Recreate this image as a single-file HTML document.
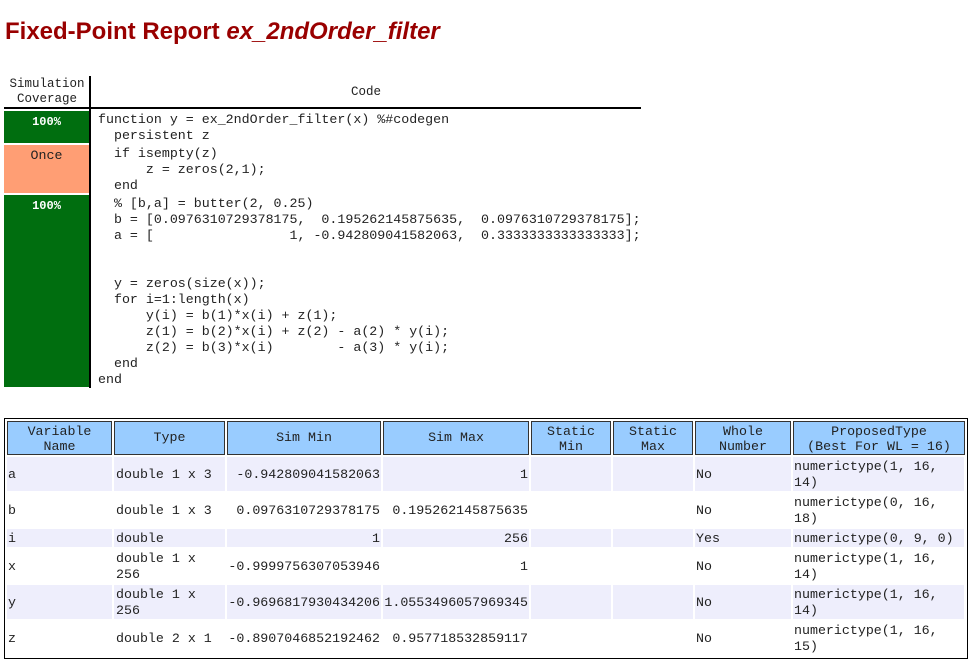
<!DOCTYPE html>
<html><head><meta charset="utf-8"><style>
*{margin:0;padding:0;box-sizing:border-box}
body{width:973px;height:661px;background:#fff;position:relative;overflow:hidden;font-family:"Liberation Mono","Courier New",monospace;font-size:13.3px;color:#222}
.a{position:absolute}
h1{position:absolute;left:5px;top:18px;font:bold 24px "Liberation Sans",Arial,sans-serif;color:#990000;white-space:nowrap}
.cov{position:absolute;left:4px;width:85px;text-align:center;line-height:16px;padding-top:3px}
pre{position:absolute;font:13.3px/16px "Liberation Mono",monospace;color:#222;margin:0}
.h{position:absolute;top:421px;height:34px;background:#99ccff;border:1px solid #333;text-align:center;line-height:14.5px;padding-top:3px;color:#222}
.r{position:absolute;left:7px;width:957px}
.c{position:absolute;white-space:pre;line-height:16px;margin-top:1px}
</style></head><body>
<h1>Fixed-Point Report <i>ex_2ndOrder_filter</i></h1>

<div class="a" style="left:4px;top:77px;width:86px;text-align:center;line-height:15px;font-size:12.5px">Simulation<br>Coverage</div>
<div class="a" style="left:91px;top:85px;width:550px;text-align:center;font-size:12.5px">Code</div>
<div class="a" style="left:89px;top:76px;width:2px;height:312px;background:#000"></div>
<div class="a" style="left:4px;top:107px;width:637px;height:2px;background:#000"></div>

<div class="cov" style="top:111px;height:32px;background:#006e0f;color:#fff;font-weight:bold;padding-top:3px;font-size:12px">100%</div>
<div class="cov" style="top:145px;height:48px;background:#ff9e74;padding-top:3px">Once</div>
<div class="cov" style="top:195px;height:192px;background:#006e0f;color:#fff;font-weight:bold;padding-top:3px;font-size:12px">100%</div>

<pre style="left:98px;top:112px">function y = ex_2ndOrder_filter(x) %#codegen
  persistent z</pre>
<pre style="left:98px;top:146px">  if isempty(z)
      z = zeros(2,1);
  end</pre>
<pre style="left:98px;top:196px">  % [b,a] = butter(2, 0.25)
  b = [0.0976310729378175,  0.195262145875635,  0.0976310729378175];
  a = [                 1, -0.942809041582063,  0.3333333333333333];


  y = zeros(size(x));
  for i=1:length(x)
      y(i) = b(1)*x(i) + z(1);
      z(1) = b(2)*x(i) + z(2) - a(2) * y(i);
      z(2) = b(3)*x(i)        - a(3) * y(i);
  end
end</pre>

<div class="a" style="left:4px;top:418px;width:964px;height:241px;border:1px solid #000"></div>
<div class="h" style="left:7px;width:105px">Variable<br>Name</div>
<div class="h" style="left:114px;width:111px;line-height:32px;padding:0">Type</div>
<div class="h" style="left:227px;width:154px;line-height:32px;padding:0">Sim Min</div>
<div class="h" style="left:383px;width:146px;line-height:32px;padding:0">Sim Max</div>
<div class="h" style="left:531px;width:80px">Static<br>Min</div>
<div class="h" style="left:613px;width:80px">Static<br>Max</div>
<div class="h" style="left:695px;width:96px">Whole<br>Number</div>
<div class="h" style="left:793px;width:172px">ProposedType<br>(Best For WL = 16)</div>

<div class="r" style="top:457px;height:34px;background:#eeeefc"></div>
<div class="r" style="top:529px;height:18px;background:#eeeefc"></div>
<div class="r" style="top:585px;height:34px;background:#eeeefc"></div>
<div class="a" style="left:112px;top:457px;width:2px;height:198px;background:#fff"></div>
<div class="a" style="left:225px;top:457px;width:2px;height:198px;background:#fff"></div>
<div class="a" style="left:381px;top:457px;width:2px;height:198px;background:#fff"></div>
<div class="a" style="left:529px;top:457px;width:2px;height:198px;background:#fff"></div>
<div class="a" style="left:611px;top:457px;width:2px;height:198px;background:#fff"></div>
<div class="a" style="left:693px;top:457px;width:2px;height:198px;background:#fff"></div>
<div class="a" style="left:791px;top:457px;width:2px;height:198px;background:#fff"></div>

<div class="c" style="left:8px;top:466px">a</div>
<div class="c" style="left:116px;top:466px">double 1 x 3</div>
<div class="c" style="left:227px;top:466px;width:153px;text-align:right">-0.942809041582063</div>
<div class="c" style="left:383px;top:466px;width:145px;text-align:right">1</div>
<div class="c" style="left:696px;top:466px">No</div>
<div class="c" style="left:794px;top:458px">numerictype(1, 16,
14)</div>

<div class="c" style="left:8px;top:502px">b</div>
<div class="c" style="left:116px;top:502px">double 1 x 3</div>
<div class="c" style="left:227px;top:502px;width:153px;text-align:right">0.0976310729378175</div>
<div class="c" style="left:383px;top:502px;width:145px;text-align:right">0.195262145875635</div>
<div class="c" style="left:696px;top:502px">No</div>
<div class="c" style="left:794px;top:494px">numerictype(0, 16,
18)</div>

<div class="c" style="left:8px;top:530px">i</div>
<div class="c" style="left:116px;top:530px">double</div>
<div class="c" style="left:227px;top:530px;width:153px;text-align:right">1</div>
<div class="c" style="left:383px;top:530px;width:145px;text-align:right">256</div>
<div class="c" style="left:696px;top:530px">Yes</div>
<div class="c" style="left:794px;top:530px">numerictype(0, 9, 0)</div>

<div class="c" style="left:8px;top:558px">x</div>
<div class="c" style="left:116px;top:550px">double 1 x
256</div>
<div class="c" style="left:227px;top:558px;width:153px;text-align:right">-0.9999756307053946</div>
<div class="c" style="left:383px;top:558px;width:145px;text-align:right">1</div>
<div class="c" style="left:696px;top:558px">No</div>
<div class="c" style="left:794px;top:550px">numerictype(1, 16,
14)</div>

<div class="c" style="left:8px;top:594px">y</div>
<div class="c" style="left:116px;top:586px">double 1 x
256</div>
<div class="c" style="left:227px;top:594px;width:153px;text-align:right">-0.9696817930434206</div>
<div class="c" style="left:383px;top:594px;width:145px;text-align:right">1.0553496057969345</div>
<div class="c" style="left:696px;top:594px">No</div>
<div class="c" style="left:794px;top:586px">numerictype(1, 16,
14)</div>

<div class="c" style="left:8px;top:630px">z</div>
<div class="c" style="left:116px;top:630px">double 2 x 1</div>
<div class="c" style="left:227px;top:630px;width:153px;text-align:right">-0.8907046852192462</div>
<div class="c" style="left:383px;top:630px;width:145px;text-align:right">0.957718532859117</div>
<div class="c" style="left:696px;top:630px">No</div>
<div class="c" style="left:794px;top:622px">numerictype(1, 16,
15)</div>
</body></html>
